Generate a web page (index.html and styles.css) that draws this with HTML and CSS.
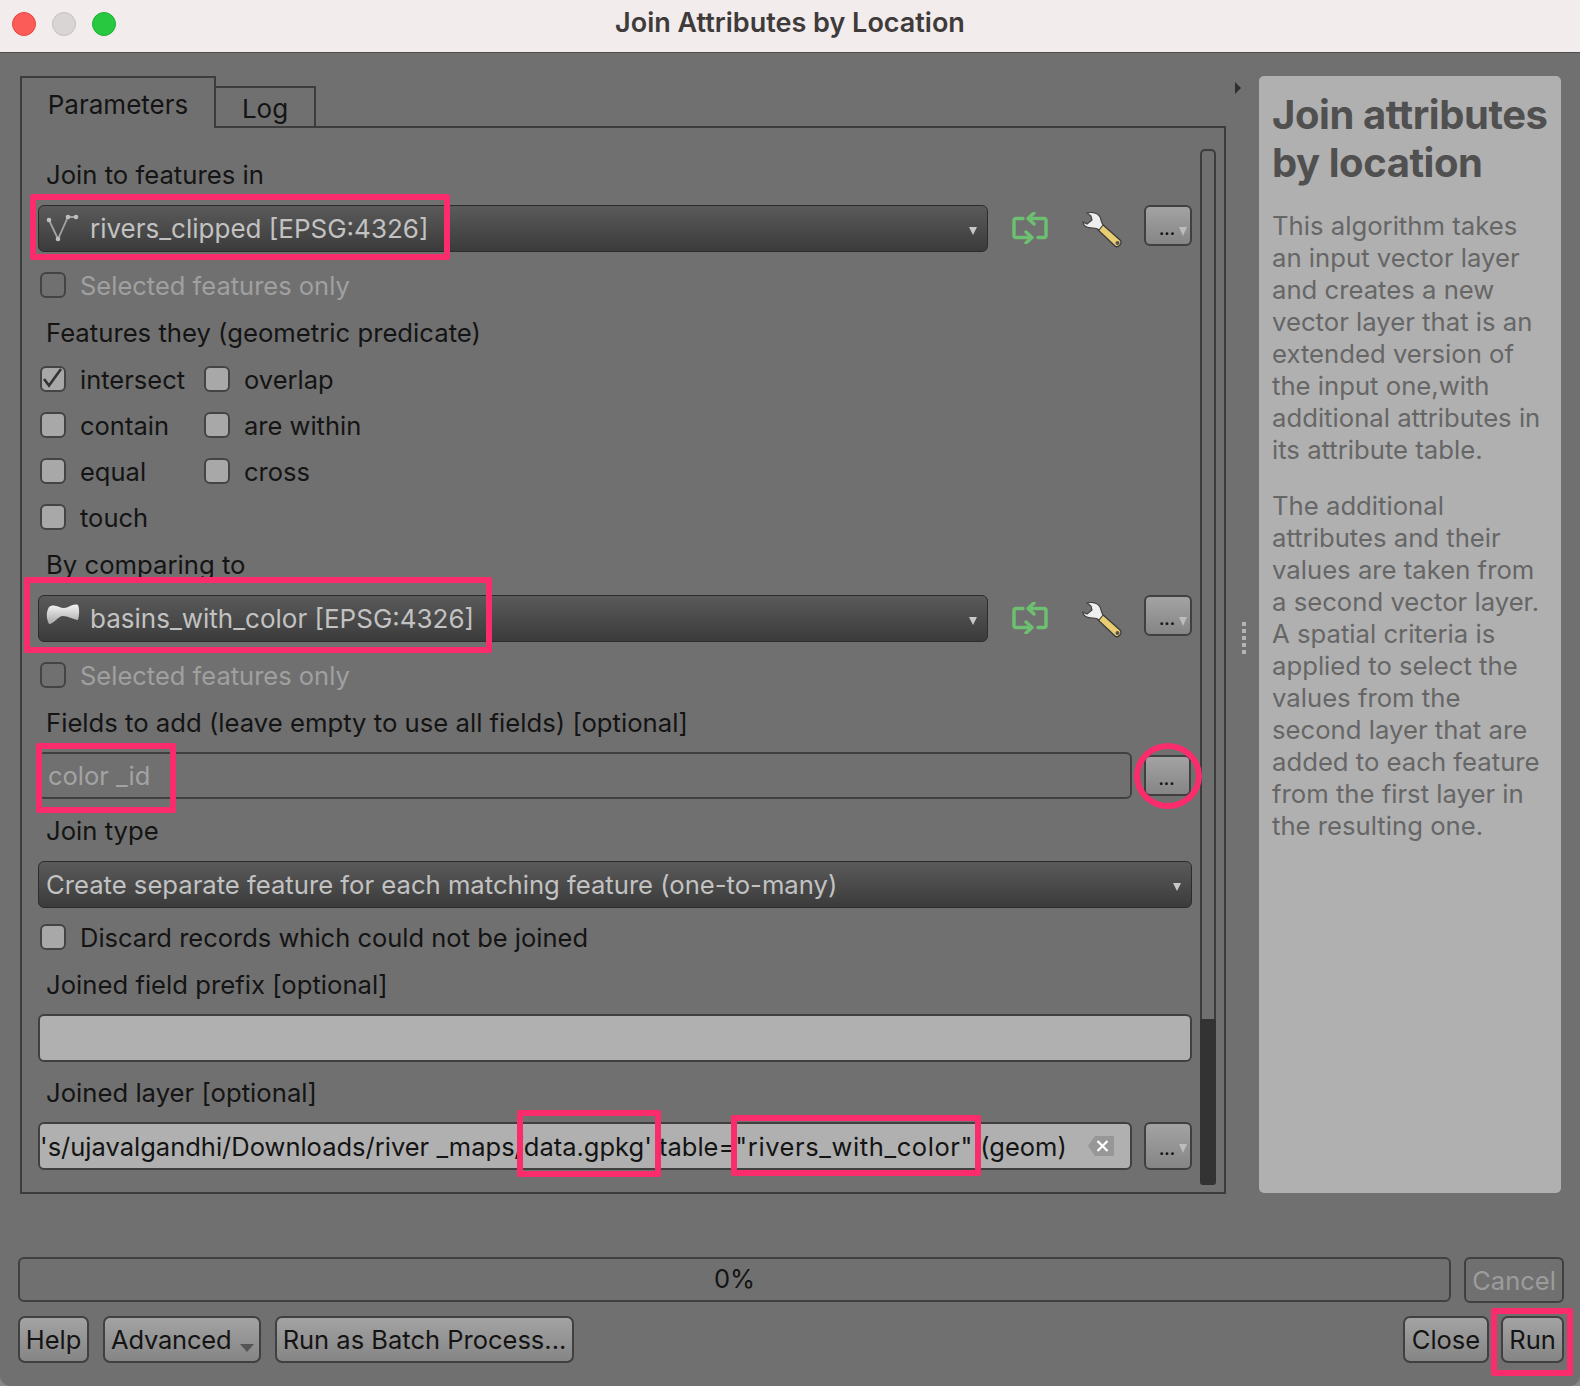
FILE: index.html
```html
<!DOCTYPE html>
<html lang="en">
<head>
<meta charset="utf-8">
<title>Join Attributes by Location</title>
<link rel="stylesheet" href="styles.css">
</head>
<body>
<div class="window">
  <header class="titlebar">
    <div class="lights"><span class="light red"></span><span class="light grey"></span><span class="light green"></span></div>
    <div class="title">Join Attributes by Location</div>
  </header>

  <main class="content">
    <section class="top">
      <div class="tabs-col">
        <div class="tabbar">
          <div class="tab active">Parameters</div>
          <div class="tab">Log</div>
        </div>
        <div class="pane">
          <div class="form">
            <div class="label l1">Join to features in</div>
            <div class="row">
              <div class="combo grow">
                <svg class="layer-ic" width="34" height="32" viewBox="0 0 34 32"><path d="M3 8 L12 27 L22 5 L30 5" fill="none" stroke="#a2a2a2" stroke-width="1.800"/><circle cx="3" cy="8" r="2.300" fill="#bdbdbd"/><circle cx="12" cy="27" r="2.300" fill="#bdbdbd"/><circle cx="22" cy="5" r="2.300" fill="#bdbdbd"/><circle cx="30" cy="5" r="2.300" fill="#bdbdbd"/></svg>
                <span class="combo-text">rivers_clipped [EPSG:4326]</span><span class="caret"></span>
              </div>
              <svg class="refresh" width="36" height="32" viewBox="0 0 36 32"><use href="#loop"/></svg>
              <svg class="wrench" width="40" height="36" viewBox="0 0 40 36"><use href="#wrench"/></svg>
              <div class="btn dots menu"><span>...</span><i class="mini"></i></div>
            </div>
            <label class="check dim c1"><span class="box"></span>Selected features only</label>
            <div class="label l2">Features they (geometric predicate)</div>
            <div class="preds">
              <label class="check"><span class="box"><svg width="22" height="22" viewBox="0 0 22 22"><path d="M2 11 L7 17.500 L19 1" fill="none" stroke="#333" stroke-width="2.600"/></svg></span>intersect</label>
              <label class="check"><span class="box"></span>overlap</label>
              <label class="check"><span class="box"></span>contain</label>
              <label class="check"><span class="box"></span>are within</label>
              <label class="check"><span class="box"></span>equal</label>
              <label class="check"><span class="box"></span>cross</label>
              <label class="check"><span class="box"></span>touch</label>
            </div>
            <div class="label l3">By comparing to</div>
            <div class="row">
              <div class="combo grow">
                <svg class="layer-ic" width="34" height="26" viewBox="0 0 34 26"><defs><linearGradient id="poly" x1="0" y1="0" x2="0" y2="1"><stop offset="0" stop-color="#f4f4f4"/><stop offset="1" stop-color="#a8a8a8"/></linearGradient></defs><path d="M3 5 C9 1 13 6 18 6 C23 6 27 1 32 3 C34 8 33 14 32 18 C26 17 22 14 17 14 C12 14 8 22 3 22 C0 16 0 10 3 5 Z" fill="url(#poly)"/></svg>
                <span class="combo-text">basins_with_color [EPSG:4326]</span><span class="caret"></span>
              </div>
              <svg class="refresh" width="36" height="32" viewBox="0 0 36 32"><use href="#loop"/></svg>
              <svg class="wrench" width="40" height="36" viewBox="0 0 40 36"><use href="#wrench"/></svg>
              <div class="btn dots menu"><span>...</span><i class="mini"></i></div>
            </div>
            <label class="check dim c2"><span class="box"></span>Selected features only</label>
            <div class="label l4">Fields to add (leave empty to use all fields) [optional]</div>
            <div class="row fields">
              <div class="input hollow grow"><span class="ph">color _id</span></div>
              <div class="btn dots short"><span>...</span></div>
            </div>
            <div class="label l5">Join type</div>
            <div class="combo wide"><span class="combo-text plain">Create separate feature for each matching feature (one-to-many)</span><span class="caret"></span></div>
            <label class="check c3"><span class="box"></span>Discard records which could not be joined</label>
            <div class="label l6">Joined field prefix [optional]</div>
            <div class="input filled prefix"></div>
            <div class="label l7">Joined layer [optional]</div>
            <div class="row joined">
              <div class="input filled grow path">
                <div class="path-text"><span>'s/ujavalgandhi/Downloads/river _maps/data.gpkg' table=</span><span class="quoted">"rivers_with_color"</span><span>&nbsp;(geom)</span></div>
                <svg class="clear" width="26" height="20" viewBox="0 0 26 20"><path d="M0 10 L7 0 H26 V20 H7 Z" fill="#979797"/><path d="M9.500 5 L19.500 15 M19.500 5 L9.500 15" stroke="#fff" stroke-width="2.200"/></svg>
              </div>
              <div class="btn dots menu tall"><span>...</span><i class="mini"></i></div>
            </div>
          </div>
          <div class="scrollbar"><div class="thumb"></div></div>
        </div>
      </div>
      <div class="splitter">
        <span class="arrow"></span>
        <span class="grip"></span>
      </div>
      <aside class="help">
        <h1>Join attributes by location</h1>
        <p>This algorithm takes an input vector layer and creates a new vector layer that is an extended version of the input one,with additional attributes in its attribute table.</p>
        <p>The additional attributes and their values are taken from a second vector layer. A spatial criteria is applied to select the values from the second layer that are added to each feature from the first layer in the resulting one.</p>
      </aside>
    </section>

    <section class="progress-row">
      <div class="progress">0%</div>
      <div class="btn cancel">Cancel</div>
    </section>
    <section class="actions">
      <div class="btn w-help">Help</div>
      <div class="btn w-adv">Advanced<i class="adv-caret"></i></div>
      <div class="btn w-batch">Run as Batch Process...</div>
      <div class="spacer"></div>
      <div class="btn w-close">Close</div>
      <div class="btn w-run">Run</div>
    </section>
  </main>

  <div class="mark m1"></div>
  <div class="mark m2"></div>
  <div class="mark m3"></div>
  <div class="mark ring"></div>
  <div class="mark m4"></div>
  <div class="mark m5"></div>
  <div class="mark m6"></div>
</div>

<svg class="defs" width="0" height="0">
  <defs>
    <g id="loop" fill="none" stroke="#6cc070" stroke-width="3.400" stroke-linejoin="round" stroke-linecap="round">
      <path d="M11 6.500 H4 Q2 6.500 2 8.500 V23.500 Q2 25.500 4 25.500 H19"/>
      <path d="M14 20 L20 25.500 L14 31"/>
      <path d="M26 25.500 H32 Q34 25.500 34 23.500 V8.500 Q34 6.500 32 6.500 H17"/>
      <path d="M22 1 L16 6.500 L22 12"/>
    </g>
    <g id="wrench">
      <path d="M20 12 L38 28 Q40 30 38 33 Q35 36 33 34 L16 18 Z" fill="#e9cd72" stroke="#3a3a3a" stroke-width="1.300"/>
      <circle cx="35.500" cy="31" r="2" fill="#555"/>
      <path d="M5 1 C10 -0.500 18 1 19 8 C19.500 10 20 11 21 13 L17 18 C15 16 13 16 11 16 C5 16 1 14 0.800 10 L5 12 L10 8 L9 4 Z" fill="#efefef" stroke="#444" stroke-width="1.200"/>
    </g>
  </defs>
</svg>
</body>
</html>
```

FILE: styles.css
```css
* { box-sizing: border-box; }
html, body { margin: 0; padding: 0; }
body {
  width: 1580px;
  height: 1386px;
  background: #8a8a8a;
  font-family: Inter, "Liberation Sans", sans-serif;
  font-size: 25.500px;
  color: #141414;
  overflow: hidden;
}
.window {
  position: relative;
  width: 1580px;
  height: 1386px;
  background: #707070;
  border-radius: 0 0 10px 10px;
  overflow: hidden;
}
.titlebar {
  position: relative;
  height: 53px;
  background: #f2ecec;
  border-bottom: 1px solid #4d4d4d;
  display: flex;
  align-items: center;
  justify-content: center;
}
.lights {
  position: absolute;
  left: 12px;
  top: 12px;
  display: flex;
  gap: 16px;
}
.light { width: 24px; height: 24px; border-radius: 50%; }
.red { background: #fc5c57; border: 1px solid #e2463f; }
.grey { background: #dad5d5; border: 1px solid #c5c0c0; }
.green { background: #28c840; border: 1px solid #1fb032; }
.title { font-size: 27px; font-weight: 600; color: #3f3b3b; margin-top: -7px; }

.content { padding: 23px 16px 0 18px; }
.top { display: flex; align-items: stretch; height: 1118px; }
.tabs-col { width: 1206px; margin-left: 2px; display: flex; flex-direction: column; flex: none; }
.tabbar { display: flex; align-items: flex-end; height: 50px; }
.tab {
  width: 100px;
  height: 40px;
  border: 2px solid #3c3c3c;
  border-bottom: none;
  border-left: none;
  display: flex;
  align-items: center;
  justify-content: center;
  font-size: 26px;
  padding-top: 2px;
}
.tab.active {
  width: 196px;
  height: 52px;
  margin-bottom: -2px;
  border-left: 2px solid #3c3c3c;
  background: #707070;
  position: relative;
  z-index: 1;
  padding: 2px 0 0 0;
}
.pane {
  flex: 1;
  border: 2px solid #3c3c3c;
  display: flex;
  padding: 21px 8px 7px 16px;
}
.form { width: 1154px; margin-right: 8px; flex: none; }
.scrollbar {
  width: 16px;
  border: 2px solid #3c3c3c;
  border-radius: 5px;
  position: relative;
  height: 1036px;
  flex: none;
}
.thumb {
  position: absolute;
  left: -2px;
  right: -2px;
  bottom: -2px;
  height: 166px;
  background: #333;
  border-radius: 3px;
}
.label { height: 30px; line-height: 30px; padding-left: 8px; font-size: 25.700px; }
.l1 { margin-top: 11px; }
.l2 { margin-top: 18px; }
.l3 { margin-top: 18px; }
.l4 { margin-top: 18px; }
.l5 { margin-top: 17px; }
.l6 { margin-top: 18px; }
.l7 { margin-top: 16px; }

.row { display: flex; align-items: flex-start; margin-top: 15px; }
.grow { flex: 1; min-width: 0; }
.combo {
  position: relative;
  height: 47px;
  border-radius: 6px;
  border: 1px solid #2c2c2c;
  background: linear-gradient(#5a5a5a, #3b3b3b);
  display: flex;
  align-items: center;
  color: #c2c2c2;
  font-size: 26px;
}
.layer-ic { position: absolute; left: 7px; top: 6px; }
.combo-text { padding-left: 51px; }
.combo-text.plain { padding-left: 7px; font-size: 25.650px; }
.combo.wide { margin-top: 15px; }
.caret {
  position: absolute;
  right: 10px;
  top: 21px;
  border-left: 4px solid transparent;
  border-right: 4px solid transparent;
  border-top: 8px solid #c8c8c8;
}
.refresh { margin: 7px 0 0 24px; flex: none; }
.wrench { margin: 7px 0 0 34px; flex: none; }
.btn {
  height: 47px;
  border: 2px solid #404040;
  border-radius: 6px;
  background: linear-gradient(#a3a3a3, #858585);
  display: flex;
  align-items: center;
  justify-content: center;
  position: relative;
  color: #141414;
}
.dots { width: 48px; height: 41px; flex: none; font-size: 16px; font-weight: 700; }
.dots span { position: relative; top: 3px; left: -1px; }
.menu { margin-left: 22px; }
.mini {
  position: absolute;
  right: 3px;
  top: 20px;
  border-left: 4px solid transparent;
  border-right: 4px solid transparent;
  border-top: 9px solid #bcbcbc;
}
.check { display: flex; align-items: center; height: 30px; margin-left: 2px; }
.box {
  width: 26px;
  height: 26px;
  border-radius: 6px;
  border: 2px solid #444;
  margin-right: 14px;
  flex: none;
  background: #a8a8a8;
  display: flex;
  align-items: center;
  justify-content: center;
}
.dim { color: #a0a0a0; }
.dim .box { background: transparent; }
.c1 { margin-top: 18px; }
.c2 { margin-top: 18px; }
.c3 { margin-top: 14px; }
.preds {
  display: grid;
  grid-template-columns: 164px auto;
  justify-content: start;
  row-gap: 16px;
  margin-top: 16px;
}

.input { height: 47px; border-radius: 6px; border: 2px solid #404040; display: flex; align-items: center; }
.hollow { background: transparent; padding-left: 8px; }
.ph { color: #a3a3a3; }
.fields { margin-top: 14px; align-items: center; }
.short { margin-left: 12px; width: 47px; height: 41px; margin-right: 1px; }
.filled { background: #b0b0b0; }
.prefix { margin-top: 14px; height: 48px; }
.joined { margin-top: 14px; }
.path { position: relative; padding-right: 64px; height: 48px; }
.path-text { flex: 1; display: flex; justify-content: flex-end; white-space: nowrap; }
.quoted { letter-spacing: 0.600px; }
.clear { position: absolute; right: 16px; top: 12px; }
.tall { margin-left: 12px; height: 48px; }

.splitter { width: 33px; position: relative; flex: none; }
.arrow {
  position: absolute;
  left: 9px;
  top: 6px;
  border-top: 6px solid transparent;
  border-bottom: 6px solid transparent;
  border-left: 6px solid #2f2f2f;
}
.grip {
  position: absolute;
  left: 16px;
  top: 546px;
  width: 4px;
  height: 34px;
  background: repeating-linear-gradient(#b4b4b4 0 4px, transparent 4px 7px);
}
.help {
  width: 302px;
  flex: none;
  margin-bottom: 1px;
  background: #b0b0b0;
  border-radius: 5px;
  padding: 15px 13px;
  color: #666;
  font-size: 25.700px;
  line-height: 32px;
}
.help h1 {
  margin: 0 -8px 23px 0;
  font-size: 40px;
  font-weight: 700;
  line-height: 48px;
  letter-spacing: -0.450px;
  color: #505050;
}
.help p { margin: 0 0 24px; }

.progress-row { display: flex; margin-top: 63px; gap: 13px; align-items: flex-start; }
.progress {
  width: 1433px;
  height: 45px;
  flex: none;
  border: 2px solid #404040;
  border-radius: 6px;
  display: flex;
  align-items: center;
  justify-content: center;
  padding-bottom: 3px;
}
.cancel { flex: 1; height: 46px; background: transparent; color: #9c9c9c; }
.actions { display: flex; gap: 14px; margin-top: 13px; }
.actions .btn { border-radius: 7px; }
.w-help { width: 71px; }
.w-adv { width: 158px; justify-content: flex-start; padding-left: 6px; letter-spacing: -0.200px; }
.w-batch { width: 299px; }
.w-close { width: 86px; }
.w-run { width: 63px; margin-left: -2px; }
.adv-caret {
  position: absolute;
  right: 5px;
  bottom: 9px;
  border-left: 7px solid transparent;
  border-right: 7px solid transparent;
  border-top: 8px solid #555;
}
.spacer { flex: 1; }
.defs { position: absolute; }

.mark { position: absolute; border: 6px solid #fb2c6c; border-radius: 2px; pointer-events: none; }
.m1 { left: 30px; top: 194px; width: 420px; height: 66px; }
.m2 { left: 24px; top: 577px; width: 468px; height: 76px; }
.m3 { left: 36px; top: 743px; width: 140px; height: 70px; }
.ring { left: 1134px; top: 743px; width: 68px; height: 66px; border-radius: 50%; }
.m4 { left: 517px; top: 1110px; width: 144px; height: 67px; }
.m5 { left: 731px; top: 1115px; width: 250px; height: 61px; }
.m6 { left: 1491px; top: 1308px; width: 82px; height: 68px; }
```
